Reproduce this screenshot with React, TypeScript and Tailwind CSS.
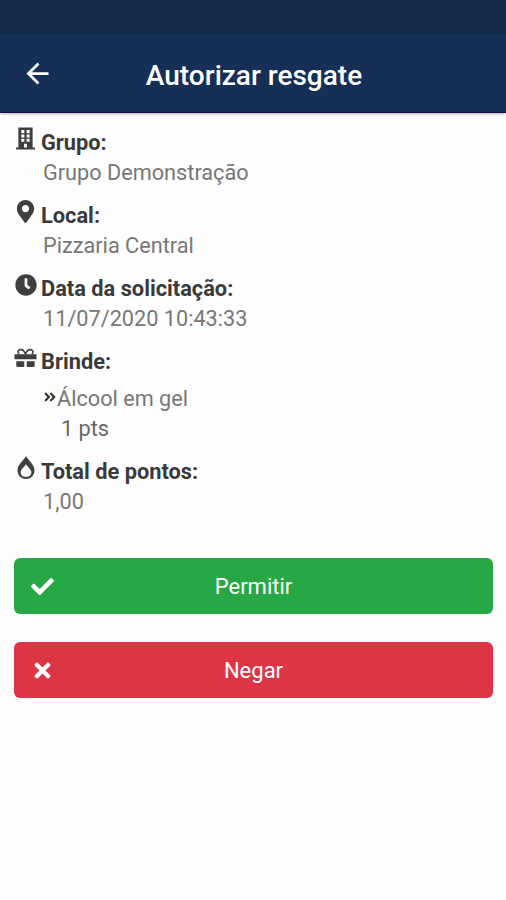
import type { ReactNode } from "react";
import { FaAngleDoubleRight, FaCheck, FaClock, FaMapMarkerAlt, FaTimes } from "react-icons/fa";
import { MdArrowBack } from "react-icons/md";

type FieldProps = {
  icon: ReactNode;
  label: string;
  children: ReactNode;
};

function BuildingIcon() {
  return (
    <svg width="19" height="23" viewBox="0 0 20 23" fill="currentColor" aria-hidden="true">
      <path
        fillRule="evenodd"
        d="M2.5 0h15v21H20v2H0v-2h2.5zM5.6 2.6v3.3h3.2V2.6zM11.2 2.6v3.3h3.2V2.6zM5.6 7.2v3.3h3.2V7.2zM11.2 7.2v3.3h3.2V7.2zM5.6 11.8v3h3.2v-3zM11.2 11.8v3h3.2v-3zM8.5 17v4h3v-4z"
      />
    </svg>
  );
}

function GiftIcon() {
  return (
    <svg width="24" height="20" viewBox="0 0 24 20" fill="currentColor" aria-hidden="true">
      <path d="M0.5 6h23v5.2h-23zM2.4 13.5h8.3v5.9H4q-1.6 0-1.6-1.6zM13.3 13.5h8.3v4.3q0 1.6-1.6 1.6h-6.7z" />
      <path
        d="M12 6C11 3 9 1.2 7 1.2C5 1.2 4 2.6 4.3 4.2L5 6M12 6C13 3 15 1.2 17 1.2C19 1.2 20 2.6 19.7 4.2L19 6"
        fill="none"
        stroke="currentColor"
        strokeWidth="1.7"
      />
    </svg>
  );
}

function DropIcon() {
  return (
    <svg width="18" height="23" viewBox="0 0 18 23" fill="currentColor" aria-hidden="true">
      <path
        fillRule="evenodd"
        d="M9 0C6.6 4.6 0.5 8.4 0.5 14.3C0.5 19.3 4 23 9 23S17.5 19.3 17.5 14.3C17.5 8.4 11.4 4.6 9 0zM9 8.2C10.6 11.2 14.4 13.3 14.4 16.3C14.4 19.2 12.1 20.9 9 20.9S3.6 19.2 3.6 16.3C3.6 13.3 7.4 11.2 9 8.2z"
      />
    </svg>
  );
}

function Field({ icon, label, children }: FieldProps) {
  return (
    <section className="mb-3">
      <div className="flex h-[31px] items-start">
        <span className="flex h-[23px] w-[23px] shrink-0 items-center justify-center text-[#3f3f3f]">
          {icon}
        </span>
        <h2 className="ml-[4px] whitespace-nowrap text-[21.8px] font-bold leading-[31px] text-[#3a3a3a]">
          {label}
        </h2>
      </div>
      <div className="ml-[29px] text-[21.7px] leading-[30px] text-[#777]">{children}</div>
    </section>
  );
}

export default function App() {
  return (
    <div className="min-h-[900px] w-full bg-[#fefefe] font-['Roboto',sans-serif]">
      <div className="h-[34px] bg-[#152a48]" />
      <header className="flex h-[79px] items-center border-b border-[#120f47] bg-[#162f57] shadow-[0_1px_3px_rgba(0,0,0,0.3)]">
        <button aria-label="Voltar" className="ml-[21px] w-8 text-white">
          <MdArrowBack size={33} />
        </button>
        <h1 className="mr-[51px] mt-[5px] flex-1 text-center text-[28px] font-medium leading-8 text-white">
          Autorizar resgate
        </h1>
      </header>
      <main className="pl-[14px] pr-[13px] pt-[14px]">
        <Field icon={<BuildingIcon />} label="Grupo:">
          Grupo Demonstração
        </Field>
        <Field icon={<FaMapMarkerAlt size={23} />} label="Local:">
          Pizzaria Central
        </Field>
        <Field icon={<FaClock size={22} />} label="Data da solicitação:">
          11/07/2020 10:43:33
        </Field>
        <Field icon={<GiftIcon />} label="Brinde:">
          <div className="flex items-center pt-[7px]">
            <FaAngleDoubleRight size={14} className="-mt-[5px] text-[#333]" />
            <span>Álcool em gel</span>
          </div>
          <div className="ml-[18px] text-[#666]">1 pts</div>
        </Field>
        <Field icon={<DropIcon />} label="Total de pontos:">
          1,00
        </Field>
        <div className="mt-[41px] flex flex-col gap-7 text-[22px] text-white">
          <button className="flex h-14 items-center rounded-md bg-[#28a745]">
            <FaCheck size={23} className="ml-[17px]" />
            <span className="mr-10 flex-1 text-center">Permitir</span>
          </button>
          <button className="flex h-14 items-center rounded-md bg-[#dc3545]">
            <FaTimes size={23} className="ml-[17px]" />
            <span className="mr-10 flex-1 text-center">Negar</span>
          </button>
        </div>
      </main>
    </div>
  );
}
